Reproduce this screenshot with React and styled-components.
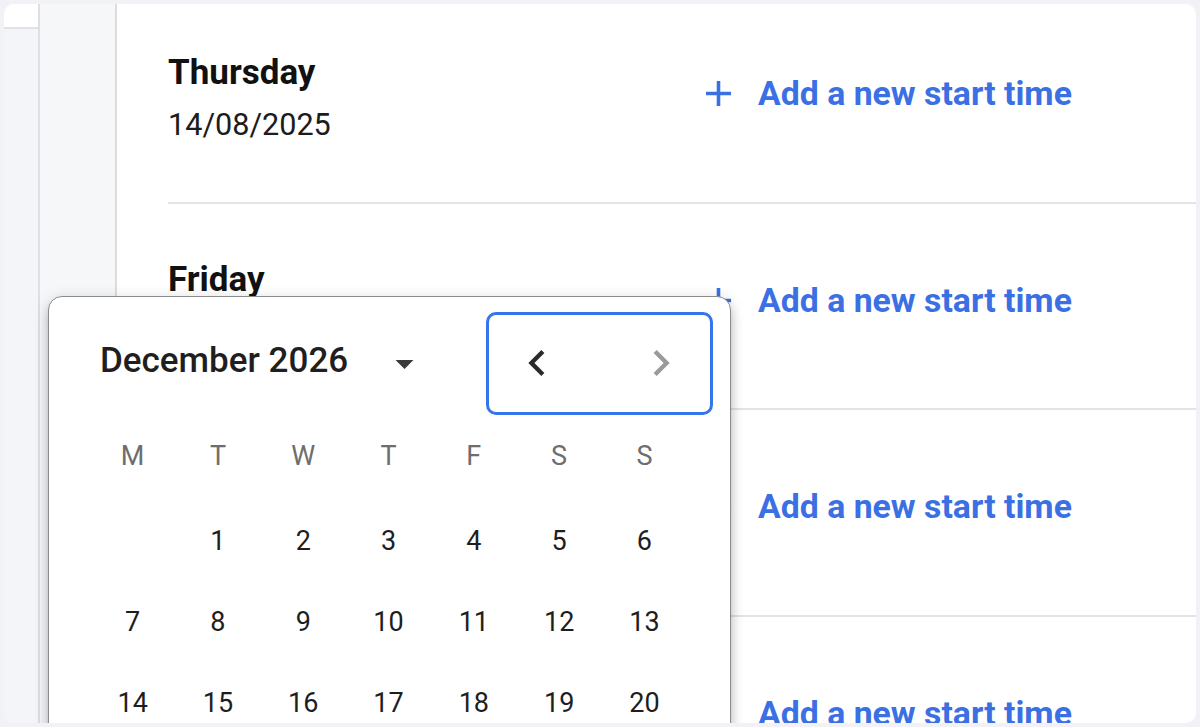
import React from "react";
import styled, { createGlobalStyle } from "styled-components";

const GlobalStyle = createGlobalStyle`
  * {
    box-sizing: border-box;
  }
  body {
    margin: 0;
    background: #f1f1f6;
    font-family: Roboto, "Liberation Sans", Arial, sans-serif;
  }
`;

const Frame = styled.div`
  width: 1200px;
  height: 727px;
  padding: 4px;
`;

const Panel = styled.div`
  position: relative;
  display: flex;
  height: 100%;
  background: #ffffff;
  border-radius: 10px;
  overflow: hidden;
`;

const Rail = styled.div`
  display: flex;
  flex-direction: column;
  width: 36px;
  flex-shrink: 0;
  background: #f4f5f8;
  border-right: 2px solid #dfdfe3;
`;

const RailTop = styled.div`
  height: 25px;
  background: #ffffff;
  border-bottom: 2px solid #e2e2e6;
`;

const Side = styled.div`
  width: 77px;
  flex-shrink: 0;
  background: #f6f7f9;
  border-right: 2px solid #dcdcdf;
`;

const Content = styled.div`
  flex: 1;
  overflow: hidden;
  padding-left: 51px;
`;

const List = styled.div`
  margin-top: -7px;
`;

const Row = styled.div`
  display: flex;
  align-items: flex-start;
  height: 206.5px;
  padding-top: 55px;
  border-bottom: 2px solid #e4e4e6;
`;

const DayInfo = styled.div`
  width: 529px;
  flex-shrink: 0;
`;

const DayName = styled.div`
  font-size: 35px;
  line-height: 42px;
  font-weight: 700;
  color: #111111;
`;

const DayDate = styled.div`
  margin-top: 13px;
  font-size: 30.6px;
  line-height: 36px;
  color: #1c1c1c;
`;

const AddLink = styled.a`
  display: flex;
  align-items: center;
  gap: 18px;
  margin-top: 20px;
  font-size: 33.8px;
  line-height: 43px;
  font-weight: 700;
  color: #3a70e3;
  text-decoration: none;
  white-space: nowrap;

  svg {
    flex-shrink: 0;
  }
`;

const Popover = styled.div`
  position: absolute;
  left: 44px;
  top: 292px;
  width: 683px;
  height: 520px;
  background: #ffffff;
  border: 1.5px solid #8c8c8c;
  border-radius: 14px;
  box-shadow: 0 5px 5px -3px rgba(0, 0, 0, 0.2),
    0 8px 10px 1px rgba(0, 0, 0, 0.14), 0 3px 14px 2px rgba(0, 0, 0, 0.12);
  padding: 15px 17px 0 41px;
`;

const CalHeader = styled.div`
  display: flex;
  align-items: center;
  height: 102px;
`;

const MonthLabel = styled.div`
  margin-left: 10px;
  margin-bottom: 5px;
  font-size: 35px;
  font-weight: 500;
  color: #1f1f1f;
  white-space: nowrap;
`;

const IconButton = styled.button`
  display: flex;
  align-items: center;
  justify-content: center;
  padding: 0;
  border: none;
  background: none;
  color: ${(p) => (p.$muted ? "#9a9a9a" : "#2a2a2a")};
`;

const DropButton = styled(IconButton)`
  margin-left: 35px;
  color: #3a3a3a;
`;

const NavBox = styled.div`
  display: flex;
  align-items: center;
  justify-content: space-between;
  margin-left: auto;
  width: 227px;
  height: 103px;
  padding: 0 23px 0 22px;
  border: 3px solid #3576eb;
  border-radius: 10px;
`;

const Grid = styled.div`
  display: grid;
  grid-template-columns: repeat(7, 85.3px);
  grid-auto-rows: ${(p) => p.$row}px;
  margin-top: ${(p) => p.$gap}px;
`;

const WeekDay = styled.div`
  display: flex;
  align-items: center;
  justify-content: center;
  font-size: 27px;
  color: #6e6e6e;
`;

const Day = styled.div`
  display: flex;
  align-items: center;
  justify-content: center;
  font-size: 27px;
  color: #1e1e1e;
`;

const PlusIcon = () => (
  <svg width="43" height="43" viewBox="0 0 24 24" fill="currentColor">
    <path d="M19 13h-6v6h-2v-6H5v-2h6V5h2v6h6z" />
  </svg>
);

const DropIcon = () => (
  <svg width="43" height="43" viewBox="0 0 24 24" fill="currentColor">
    <path d="M7 10l5 5 5-5z" />
  </svg>
);

const PrevIcon = () => (
  <svg width="52" height="52" viewBox="0 0 24 24" fill="currentColor">
    <path d="M15.41 7.41 14 6l-6 6 6 6 1.41-1.41L10.83 12z" />
  </svg>
);

const NextIcon = () => (
  <svg width="52" height="52" viewBox="0 0 24 24" fill="currentColor">
    <path d="M10 6 8.59 7.41 13.17 12l-4.58 4.59L10 18l6-6z" />
  </svg>
);

const days = [
  { name: "Thursday", date: "14/08/2025" },
  { name: "Friday", date: "15/08/2025" },
  { name: "Saturday", date: "16/08/2025" },
  { name: "Sunday", date: "17/08/2025" },
];

const weekDays = ["M", "T", "W", "T", "F", "S", "S"];

// December 2026 starts on a Tuesday
const cells = [null, ...Array.from({ length: 31 }, (_, i) => i + 1)];

const App = () => {
  return (
    <Frame>
      <GlobalStyle />
      <Panel>
        <Rail>
          <RailTop />
        </Rail>
        <Side />
        <Content>
          <List>
            {days.map((d) => (
              <Row key={d.name}>
                <DayInfo>
                  <DayName>{d.name}</DayName>
                  <DayDate>{d.date}</DayDate>
                </DayInfo>
                <AddLink href="#">
                  <PlusIcon />
                  Add a new start time
                </AddLink>
              </Row>
            ))}
          </List>
        </Content>

        <Popover>
          <CalHeader>
            <MonthLabel>December 2026</MonthLabel>
            <DropButton>
              <DropIcon />
            </DropButton>
            <NavBox>
              <IconButton>
                <PrevIcon />
              </IconButton>
              <IconButton $muted>
                <NextIcon />
              </IconButton>
            </NavBox>
          </CalHeader>
          <Grid $row={48} $gap={18}>
            {weekDays.map((w, i) => (
              <WeekDay key={i}>{w}</WeekDay>
            ))}
          </Grid>
          <Grid $row={81} $gap={20}>
            {cells.map((c, i) => (
              <Day key={i}>{c}</Day>
            ))}
          </Grid>
        </Popover>
      </Panel>
    </Frame>
  );
};

export default App;
